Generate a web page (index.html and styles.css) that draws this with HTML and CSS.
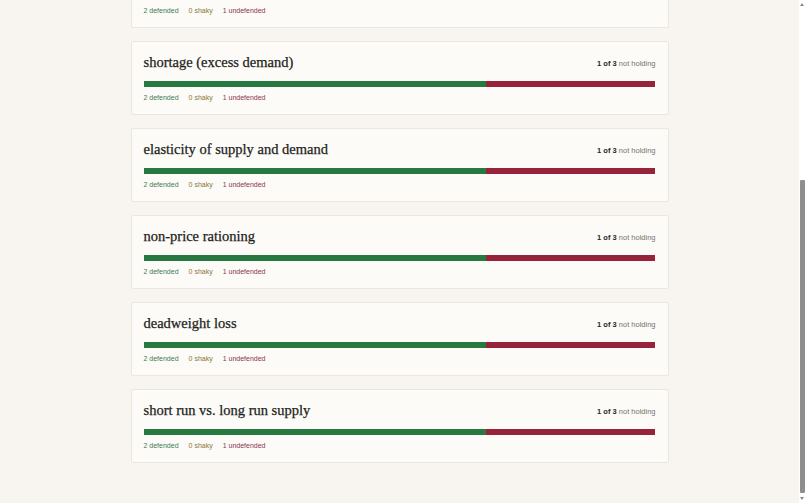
FILE: index.html
```html
<!DOCTYPE html>
<html lang="en">
<head>
<meta charset="utf-8">
<title>Concepts</title>
<link rel="stylesheet" href="styles.css">
</head>
<body>
<main class="list">
  <section class="card">
    <div class="card-head"><h2 class="title">supply and demand</h2><div class="count"><b>1 of 3</b> not holding</div></div>
    <div class="bar"><span class="seg def" style="width:66.8%"></span><span class="seg und" style="width:33.2%"></span></div>
    <div class="stats"><span class="s-def">2 defended</span><span class="s-shaky">0 shaky</span><span class="s-und">1 undefended</span></div>
  </section>
  <section class="card">
    <div class="card-head"><h2 class="title">equilibrium price</h2><div class="count"><b>1 of 3</b> not holding</div></div>
    <div class="bar"><span class="seg def" style="width:66.8%"></span><span class="seg und" style="width:33.2%"></span></div>
    <div class="stats"><span class="s-def">2 defended</span><span class="s-shaky">0 shaky</span><span class="s-und">1 undefended</span></div>
  </section>
  <section class="card">
    <div class="card-head"><h2 class="title">surplus (excess supply)</h2><div class="count"><b>1 of 3</b> not holding</div></div>
    <div class="bar"><span class="seg def" style="width:66.8%"></span><span class="seg und" style="width:33.2%"></span></div>
    <div class="stats"><span class="s-def">2 defended</span><span class="s-shaky">0 shaky</span><span class="s-und">1 undefended</span></div>
  </section>
  <section class="card">
    <div class="card-head"><h2 class="title">shortage (excess demand)</h2><div class="count"><b>1 of 3</b> not holding</div></div>
    <div class="bar"><span class="seg def" style="width:66.8%"></span><span class="seg und" style="width:33.2%"></span></div>
    <div class="stats"><span class="s-def">2 defended</span><span class="s-shaky">0 shaky</span><span class="s-und">1 undefended</span></div>
  </section>
  <section class="card">
    <div class="card-head"><h2 class="title">elasticity of supply and demand</h2><div class="count"><b>1 of 3</b> not holding</div></div>
    <div class="bar"><span class="seg def" style="width:66.8%"></span><span class="seg und" style="width:33.2%"></span></div>
    <div class="stats"><span class="s-def">2 defended</span><span class="s-shaky">0 shaky</span><span class="s-und">1 undefended</span></div>
  </section>
  <section class="card">
    <div class="card-head"><h2 class="title">non-price rationing</h2><div class="count"><b>1 of 3</b> not holding</div></div>
    <div class="bar"><span class="seg def" style="width:66.8%"></span><span class="seg und" style="width:33.2%"></span></div>
    <div class="stats"><span class="s-def">2 defended</span><span class="s-shaky">0 shaky</span><span class="s-und">1 undefended</span></div>
  </section>
  <section class="card">
    <div class="card-head"><h2 class="title">deadweight loss</h2><div class="count"><b>1 of 3</b> not holding</div></div>
    <div class="bar"><span class="seg def" style="width:66.8%"></span><span class="seg und" style="width:33.2%"></span></div>
    <div class="stats"><span class="s-def">2 defended</span><span class="s-shaky">0 shaky</span><span class="s-und">1 undefended</span></div>
  </section>
  <section class="card">
    <div class="card-head"><h2 class="title">short run vs. long run supply</h2><div class="count"><b>1 of 3</b> not holding</div></div>
    <div class="bar"><span class="seg def" style="width:66.8%"></span><span class="seg und" style="width:33.2%"></span></div>
    <div class="stats"><span class="s-def">2 defended</span><span class="s-shaky">0 shaky</span><span class="s-und">1 undefended</span></div>
  </section>
</main>
<div class="scrollbar" aria-hidden="true">
  <span class="sb-up"></span>
  <span class="sb-thumb"></span>
  <span class="sb-down"></span>
</div>
<script src="script.js"></script>
</body>
</html>
```
FILE: styles.css
```css
html {
  background: #f8f5f0;
  scroll-behavior: auto;
}
body {
  margin: 0;
  padding-right: 7px;
  font-family: "Liberation Sans", Arial, sans-serif;
  color: #2a2622;
}
.list {
  width: 538px;
  margin: 0 auto;
  padding: 53px 0 40px;
  display: flex;
  flex-direction: column;
  gap: 13px;
}
.card {
  box-sizing: border-box;
  height: 74px;
  background: #fcfbf8;
  border: 1px solid #ebe7df;
  border-radius: 2px;
  padding: 12px 12px 0;
}
.card-head {
  display: flex;
  justify-content: space-between;
  align-items: center;
  height: 16px;
  margin-bottom: 11px;
}
.title {
  margin: 0;
  font-family: "Liberation Serif", "Times New Roman", serif;
  font-weight: normal;
  font-size: 14.5px;
  line-height: 16px;
  color: #221e1b;
  -webkit-text-stroke: 0.25px #221e1b;
}
.count {
  font-size: 7.5px;
  line-height: 10px;
  color: #78736d;
  margin-top: 4px;
}
.count b {
  color: #2a2622;
}
.bar {
  display: flex;
  height: 6px;
}
.seg.def { background: #287842; }
.seg.und { background: #962339; }
.stats {
  display: flex;
  gap: 10px;
  margin-top: 6px;
  font-size: 7px;
  line-height: 10px;
}
.s-def { color: #3d7a56; }
.s-shaky { color: #8a7634; }
.s-und { color: #8b3350; }

.scrollbar {
  position: fixed;
  top: 0;
  right: 0;
  width: 7px;
  height: 100%;
  background: #ffffff;
}
.sb-up, .sb-down {
  position: absolute;
  left: 1px;
  width: 0;
  height: 0;
  border-left: 2.5px solid transparent;
  border-right: 2.5px solid transparent;
}
.sb-up {
  top: 3px;
  border-bottom: 3px solid #8a8a8a;
}
.sb-down {
  bottom: 3px;
  border-top: 3px solid #8a8a8a;
}
.sb-thumb {
  position: absolute;
  top: 180px;
  bottom: 10px;
  left: 1px;
  width: 5px;
  background: #8e8e8e;
  border-radius: 1px;
}
```
FILE: script.js
```js
window.scrollTo(0, document.documentElement.scrollHeight);
```
